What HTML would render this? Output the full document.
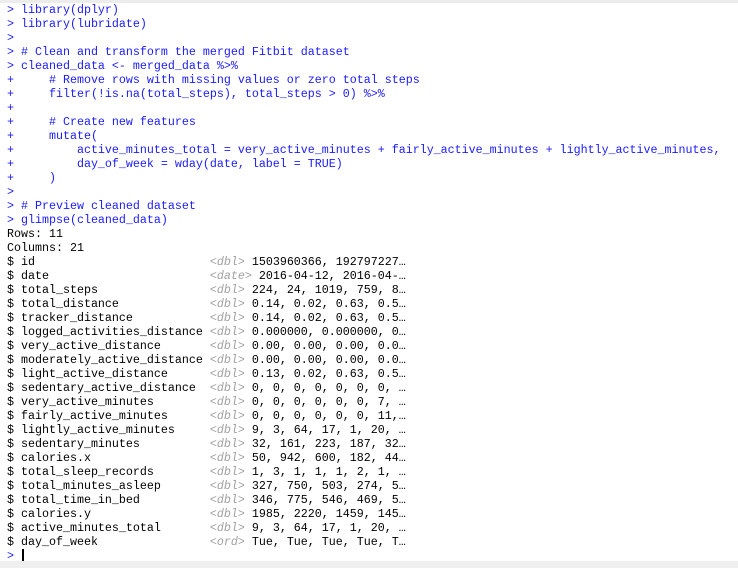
<!DOCTYPE html>
<html><head><meta charset="utf-8"><style>
html,body{margin:0;padding:0;background:#fff;}
body{width:738px;height:568px;overflow:hidden;position:relative;}
.top{position:absolute;left:0;top:0;width:738px;height:3px;background:#ececec;}
.bot{position:absolute;left:0;top:561px;width:738px;height:7px;background:#efefef;}
pre{position:absolute;left:7px;top:3px;margin:0;font-family:"Liberation Mono",monospace;font-size:11.67px;line-height:14px;color:#000;white-space:pre;}
.i{color:#1a1aff;}
.t{color:#a0a0a0;font-style:italic;}
.cur{display:inline-block;width:1.5px;height:12px;background:#000;vertical-align:-2px;margin-left:1px;}
</style></head><body>
<div class="top"></div>
<pre><span class="i">&gt; library(dplyr)
&gt; library(lubridate)
&gt; 
&gt; # Clean and transform the merged Fitbit dataset
&gt; cleaned_data &lt;- merged_data %&gt;%
+     # Remove rows with missing values or zero total steps
+     filter(!is.na(total_steps), total_steps &gt; 0) %&gt;%
+     
+     # Create new features
+     mutate(
+         active_minutes_total = very_active_minutes + fairly_active_minutes + lightly_active_minutes,
+         day_of_week = wday(date, label = TRUE)
+     )
&gt; 
&gt; # Preview cleaned dataset
&gt; glimpse(cleaned_data)</span>
Rows: 11
Columns: 21
$ id                         <span class="t">&lt;dbl&gt;</span> 1503960366, 192797227…
$ date                       <span class="t">&lt;date&gt;</span> 2016-04-12, 2016-04-…
$ total_steps                <span class="t">&lt;dbl&gt;</span> 224, 24, 1019, 759, 8…
$ total_distance             <span class="t">&lt;dbl&gt;</span> 0.14, 0.02, 0.63, 0.5…
$ tracker_distance           <span class="t">&lt;dbl&gt;</span> 0.14, 0.02, 0.63, 0.5…
$ logged_activities_distance <span class="t">&lt;dbl&gt;</span> 0.000000, 0.000000, 0…
$ very_active_distance       <span class="t">&lt;dbl&gt;</span> 0.00, 0.00, 0.00, 0.0…
$ moderately_active_distance <span class="t">&lt;dbl&gt;</span> 0.00, 0.00, 0.00, 0.0…
$ light_active_distance      <span class="t">&lt;dbl&gt;</span> 0.13, 0.02, 0.63, 0.5…
$ sedentary_active_distance  <span class="t">&lt;dbl&gt;</span> 0, 0, 0, 0, 0, 0, 0, …
$ very_active_minutes        <span class="t">&lt;dbl&gt;</span> 0, 0, 0, 0, 0, 0, 7, …
$ fairly_active_minutes      <span class="t">&lt;dbl&gt;</span> 0, 0, 0, 0, 0, 0, 11,…
$ lightly_active_minutes     <span class="t">&lt;dbl&gt;</span> 9, 3, 64, 17, 1, 20, …
$ sedentary_minutes          <span class="t">&lt;dbl&gt;</span> 32, 161, 223, 187, 32…
$ calories.x                 <span class="t">&lt;dbl&gt;</span> 50, 942, 600, 182, 44…
$ total_sleep_records        <span class="t">&lt;dbl&gt;</span> 1, 3, 1, 1, 1, 2, 1, …
$ total_minutes_asleep       <span class="t">&lt;dbl&gt;</span> 327, 750, 503, 274, 5…
$ total_time_in_bed          <span class="t">&lt;dbl&gt;</span> 346, 775, 546, 469, 5…
$ calories.y                 <span class="t">&lt;dbl&gt;</span> 1985, 2220, 1459, 145…
$ active_minutes_total       <span class="t">&lt;dbl&gt;</span> 9, 3, 64, 17, 1, 20, …
$ day_of_week                <span class="t">&lt;ord&gt;</span> Tue, Tue, Tue, Tue, T…
<span class="i">&gt; </span><span class="cur"></span></pre>
<div class="bot"></div>
</body></html>
